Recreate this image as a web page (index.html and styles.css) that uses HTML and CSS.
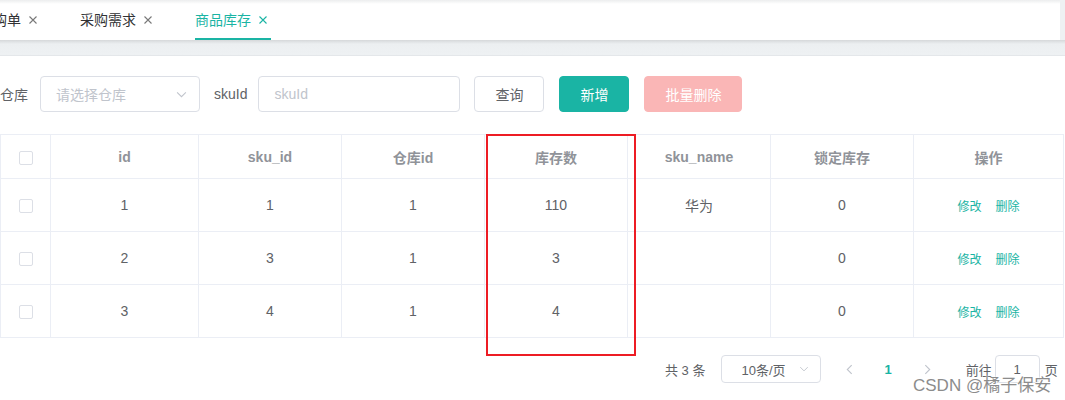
FILE: index.html
```html
<!DOCTYPE html>
<html>
<head>
<meta charset="utf-8" />
<title>商品库存</title>
<link rel="stylesheet" href="styles.css">
</head>
<body>

<div class="tabsBar">
	<div class="tab first">采购单 <svg class="close" viewBox="0 0 8 8"><path d="M0.5 0.5L7.5 7.5M7.5 0.5L0.5 7.5"/></svg></div>
	<div class="tab">采购需求 <svg class="close" viewBox="0 0 8 8"><path d="M0.5 0.5L7.5 7.5M7.5 0.5L0.5 7.5"/></svg></div>
	<div class="tab active">商品库存 <svg class="close" viewBox="0 0 8 8"><path d="M0.5 0.5L7.5 7.5M7.5 0.5L0.5 7.5"/></svg></div>
</div>
<div class="tabsGap"></div>

<div class="main">
	<div class="searchForm">
		<label class="formLabel">仓库</label>
		<div class="select wareSelect">
			<span class="placeholder">请选择仓库</span>
			<svg class="chev" viewBox="0 0 12 8"><path d="M1 1.5L6 6.5L11 1.5"/></svg>
		</div>
		<label class="formLabel skuLabel">skuId</label>
		<div class="input skuInput"><span class="placeholder">skuId</span></div>
		<button class="btn plain">查询</button>
		<button class="btn primary">新增</button>
		<button class="btn danger">批量删除</button>
	</div>

	<table class="grid">
		<colgroup>
			<col style="width:50px"><col style="width:148px"><col style="width:143px"><col style="width:143px">
			<col style="width:143px"><col style="width:143px"><col style="width:143px"><col style="width:150px">
		</colgroup>
		<thead>
			<tr>
				<th><span class="check"></span></th>
				<th>id</th><th>sku_id</th><th>仓库id</th><th>库存数</th><th>sku_name</th><th>锁定库存</th><th>操作</th>
			</tr>
		</thead>
		<tbody>
			<tr>
				<td><span class="check"></span></td>
				<td>1</td><td>1</td><td>1</td><td>110</td><td>华为</td><td>0</td>
				<td><a class="op">修改</a><a class="op">删除</a></td>
			</tr>
			<tr>
				<td><span class="check"></span></td>
				<td>2</td><td>3</td><td>1</td><td>3</td><td></td><td>0</td>
				<td><a class="op">修改</a><a class="op">删除</a></td>
			</tr>
			<tr>
				<td><span class="check"></span></td>
				<td>3</td><td>4</td><td>1</td><td>4</td><td></td><td>0</td>
				<td><a class="op">修改</a><a class="op">删除</a></td>
			</tr>
		</tbody>
	</table>

	<div class="pager">
		<span class="total">共 3 条</span>
		<div class="select sizeSelect">
			<span>10条/页</span>
			<svg class="chev" viewBox="0 0 12 8"><path d="M1 1.5L6 6.5L11 1.5"/></svg>
		</div>
		<svg class="arrow prev" viewBox="0 0 8 12"><path d="M6.5 1L1.5 6L6.5 11"/></svg>
		<span class="pageNum">1</span>
		<svg class="arrow next" viewBox="0 0 8 12"><path d="M1.5 1L6.5 6L1.5 11"/></svg>
		<span class="jump">前往</span>
		<div class="input pageInput">1</div>
		<span class="jumpEnd">页</span>
	</div>
</div>

<div class="highlight"></div>
<div class="watermark">CSDN @橘子保安</div>

</body>
</html>
```

FILE: styles.css
```css
html, body {
	margin: 0;
	padding: 0;
	width: 100%;
	height: 100%;
	overflow: hidden;
	font-family: "Liberation Sans", "Noto Sans CJK SC", sans-serif;
	font-size: 14px;
	color: rgb(96 98 102);
	background: #fff;
}

/* tabs */

.tabsBar {
	width: 1060px;
	height: 40px;
	display: flex;
	background: linear-gradient(to bottom, rgb(236 237 238), #fff 4px);
	border-right: 5px solid rgb(238 241 243);
}

.tab {
	display: flex;
	align-items: center;
	gap: 8px;
	margin-right: 39px;
	height: 38px;
	border-bottom: 2px solid transparent;
	color: rgb(48 49 51);
	white-space: nowrap;
}

.tab.first {
	margin-left: -21px;
}

.tab .close {
	width: 8px;
	height: 8px;
	margin-top: 1px;
	padding-right: 4px;
}

.tab .close path {
	stroke: rgb(120 120 120);
	stroke-width: 1.1;
	fill: none;
}

.tab.active {
	color: rgb(26 180 164);
	border-bottom-color: rgb(26 180 164);
}

.tab.active .close path {
	stroke: rgb(26 180 164);
}

.tabsGap {
	height: 15px;
	background: linear-gradient(to bottom, rgb(214 216 218), rgb(236 239 241) 4px, rgb(238 241 243));
	border-bottom: 1px solid rgb(228 231 234);
}

/* search form */

.main {
	padding-top: 20px;
}

.searchForm {
	display: flex;
	align-items: center;
	height: 36px;
}

.formLabel {
	padding-right: 12px;
	color: rgb(96 98 102);
}

.skuLabel {
	margin-left: 14px;
	padding-right: 11px;
}

.select, .input {
	box-sizing: border-box;
	height: 36px;
	border: 1px solid rgb(220 223 230);
	border-radius: 4px;
	display: flex;
	align-items: center;
	background: #fff;
}

.placeholder {
	color: rgb(192 196 204);
}

.wareSelect {
	width: 160px;
	padding: 0 12px 0 15px;
	justify-content: space-between;
}

.chev {
	width: 11px;
	height: 7px;
}

.chev path {
	stroke: rgb(192 196 204);
	stroke-width: 1.2;
	fill: none;
}

.skuInput {
	width: 202px;
	padding-left: 15px;
}

.btn {
	box-sizing: border-box;
	height: 36px;
	margin-left: 15px;
	padding: 0 20px;
	border-radius: 4px;
	font-family: inherit;
	font-size: 14px;
	border: 1px solid rgb(220 223 230);
	background: #fff;
	color: rgb(96 98 102);
}

.btn.plain {
	margin-left: 14px;
	width: 70px;
}

.btn.primary {
	width: 70px;
	background: rgb(26 180 164);
	border-color: rgb(26 180 164);
	color: #fff;
}

.btn.danger {
	width: 98px;
	background: rgb(250 182 182);
	border-color: rgb(250 182 182);
	color: #fff;
}

/* table */

.grid {
	margin-top: 22px;
	width: 1063px;
	table-layout: fixed;
	border-collapse: collapse;
	border: 1px solid rgb(235 238 245);
}

.grid th, .grid td {
	padding: 0;
	text-align: center;
	border-right: 1px solid rgb(235 238 245);
	border-bottom: 1px solid rgb(235 238 245);
}

.grid th {
	height: 43px;
	color: rgb(144 147 153);
	font-weight: bold;
}

.grid td {
	height: 52px;
	color: rgb(96 98 102);
}

.check {
	display: inline-block;
	box-sizing: border-box;
	width: 14px;
	height: 14px;
	border: 1px solid rgb(220 223 230);
	border-radius: 2px;
	vertical-align: middle;
	margin-left: 1px;
}

.op {
	font-size: 12px;
	color: rgb(26 180 164);
	margin: 0 7px;
}

/* pagination */

.pager {
	display: flex;
	align-items: center;
	height: 28px;
	margin-top: 17px;
	padding-left: 665px;
	font-size: 13px;
	color: rgb(96 98 102);
}

.sizeSelect {
	height: 28px;
	width: 100px;
	margin-left: 16px;
	padding: 0 11px 0 19px;
	justify-content: space-between;
	font-size: 13px;
}

.sizeSelect .chev {
	width: 10px;
	height: 6px;
}

.arrow {
	width: 7px;
	height: 11px;
}

.arrow path {
	stroke: rgb(192 196 204);
	stroke-width: 1.3;
	fill: none;
}

.prev {
	margin-left: 25px;
}

.pageNum {
	margin-left: 31px;
	color: rgb(26 180 164);
	font-weight: bold;
}

.next {
	margin-left: 32px;
}

.jump {
	margin-left: 35px;
}

.pageInput {
	height: 28px;
	width: 45px;
	margin-left: 3px;
	justify-content: center;
	font-size: 13px;
	color: rgb(96 98 102);
}

.jumpEnd {
	margin-left: 5px;
}

/* overlays */

.highlight {
	position: absolute;
	left: 486px;
	top: 134px;
	width: 146px;
	height: 218px;
	border: 2px solid rgb(237 28 36);
}

.watermark {
	position: absolute;
	left: 913px;
	top: 371px;
	font-size: 17px;
	color: rgb(140 140 140);
	text-shadow: 0 0 2px #fff, 0 0 2px #fff;
}
```
